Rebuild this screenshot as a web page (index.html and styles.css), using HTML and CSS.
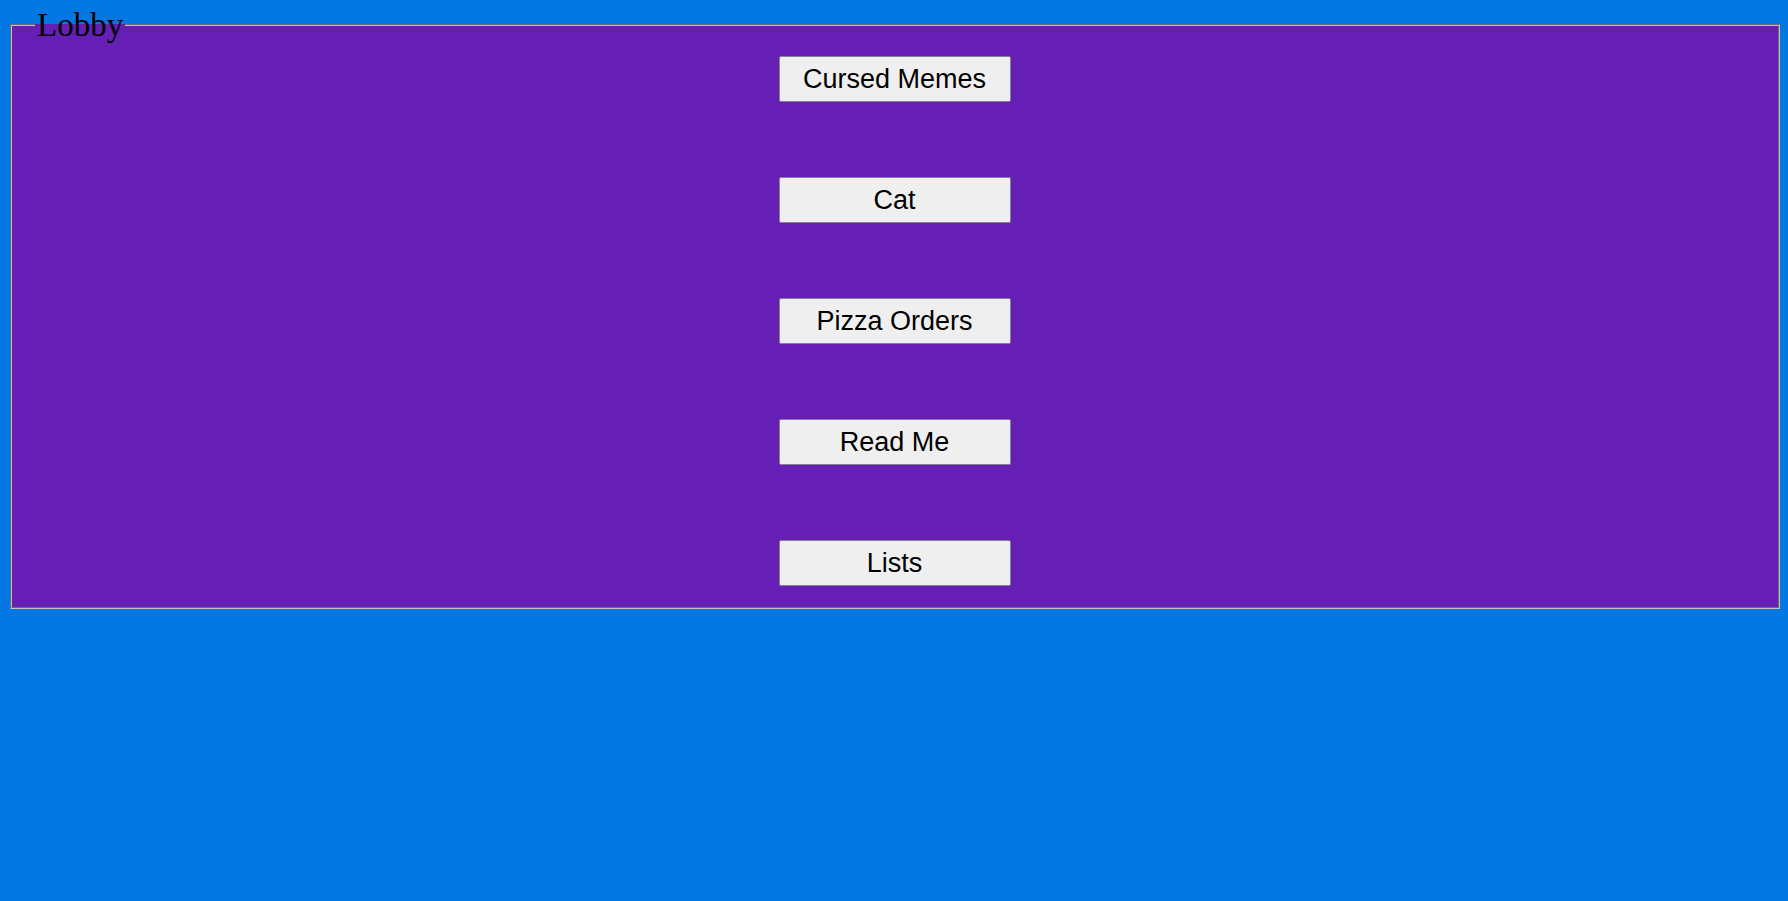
FILE: index.html
```html
<!DOCTYPE html>
<html lang="en">
<head>
<meta charset="utf-8">
<title>Lobby</title>
<link rel="stylesheet" href="styles.css">
</head>
<body class="page">
<fieldset class="lobby">
  <legend class="lobby-title">Lobby</legend>
  <div class="menu">
    <button class="menu-btn" type="button">Cursed Memes</button>
    <button class="menu-btn" type="button">Cat</button>
    <button class="menu-btn" type="button">Pizza Orders</button>
    <button class="menu-btn" type="button">Read Me</button>
    <button class="menu-btn" type="button">Lists</button>
  </div>
</fieldset>
</body>
</html>
```

FILE: styles.css
```css
html, body {
  height: 100%;
}
.page {
  margin: 8px;
  background: #0478e2;
  font-family: "Liberation Serif", "Times New Roman", serif;
}
.lobby {
  margin: 0 0 0 2px;
  padding: 14px 24px 21px 23px;
  border: 2px groove #c0c0c0;
  background: #651fb4;
  min-width: 0;
}
.lobby-title {
  padding: 0 2px;
  font-size: 33px;
  line-height: 34px;
  color: #000;
}
.menu {
  display: flex;
  flex-direction: column;
  align-items: center;
  gap: 75px;
}
.menu-btn {
  width: 232px;
  height: 46px;
  margin: 0;
  padding: 0;
  background: #efefef;
  border: 1px solid #8a7f99;
  border-radius: 2px;
  font-family: "Liberation Sans", Arial, sans-serif;
  font-size: 27px;
  color: #000;
}
```
